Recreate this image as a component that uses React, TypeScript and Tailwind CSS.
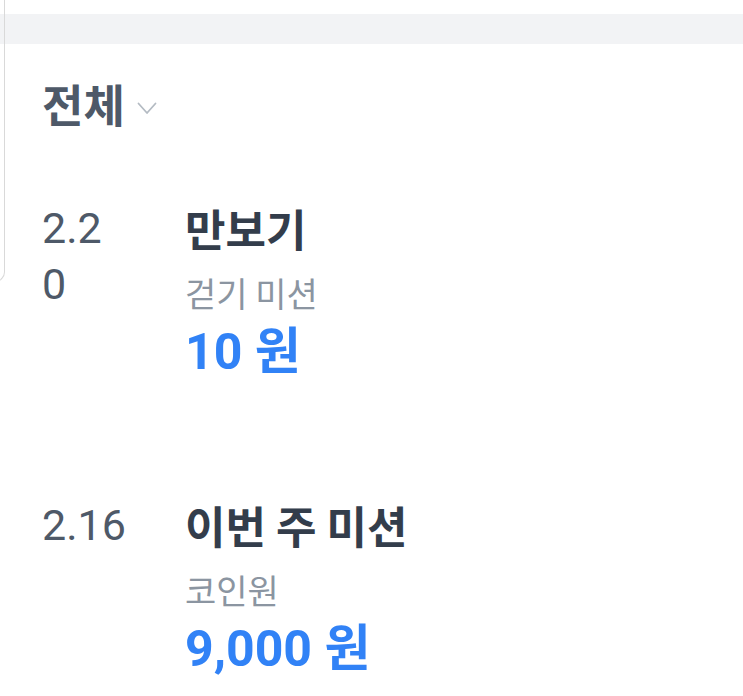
type Item = {
  date: string[];
  title: string;
  sub: string;
  amount: string;
};

const items: Item[] = [
  { date: ["2.2", "0"], title: "만보기", sub: "걷기 미션", amount: "10 원" },
  { date: ["2.16"], title: "이번 주 미션", sub: "코인원", amount: "9,000 원" },
];

const numFont = { fontFamily: 'Roboto, "Noto Sans CJK KR", sans-serif' };

function Row({ item }: { item: Item }) {
  return (
    <div className="flex flex-row">
      <div className="w-[143px] shrink-0 pt-[4px] text-[43px] leading-[56px] text-[#4e5968]" style={numFont}>
        {item.date.map((d) => (
          <div key={d}>{d}</div>
        ))}
      </div>
      <div className="flex flex-col">
        <div className="text-[44px] leading-[64px] font-bold text-[#333d4b]">{item.title}</div>
        <div className="mt-[3px] text-[34px] leading-[60px] text-[#8b95a1]">{item.sub}</div>
        <div className="mt-[2px] text-[50px] leading-[54px] font-bold text-[#3182f6]" style={numFont}>
          {item.amount}
        </div>
      </div>
    </div>
  );
}

export default function App() {
  return (
    <div
      className="relative min-h-screen bg-white overflow-hidden"
      style={{ fontFamily: '"Noto Sans CJK KR", "Noto Sans", sans-serif' }}
    >
      {/* edge of the sheet behind */}
      <div className="absolute left-[-100px] top-[-20px] w-[105px] h-[302px] border-r border-b border-[#d9d9d9] rounded-br-[10px]" />

      <div className="pt-[14px]">
        <div className="h-[30px] bg-[#f2f3f5]" />
      </div>

      <div className="pl-[42px] pt-[30px]">
        <div className="flex flex-row items-center gap-[12px]">
          <span className="text-[45px] leading-[60px] font-bold text-[#4e5968]">전체</span>
          <svg width="20" height="13" viewBox="0 0 20 13" className="mt-[8px]">
            <polyline points="1.5,1.5 10,11 18.5,1.5" fill="none" stroke="#b4bbc3" strokeWidth="1.8" strokeLinecap="round" strokeLinejoin="round" />
          </svg>
        </div>

        <div className="mt-[62px] flex flex-col gap-[114px]">
          {items.map((item) => (
            <Row key={item.title} item={item} />
          ))}
        </div>
      </div>
    </div>
  );
}
